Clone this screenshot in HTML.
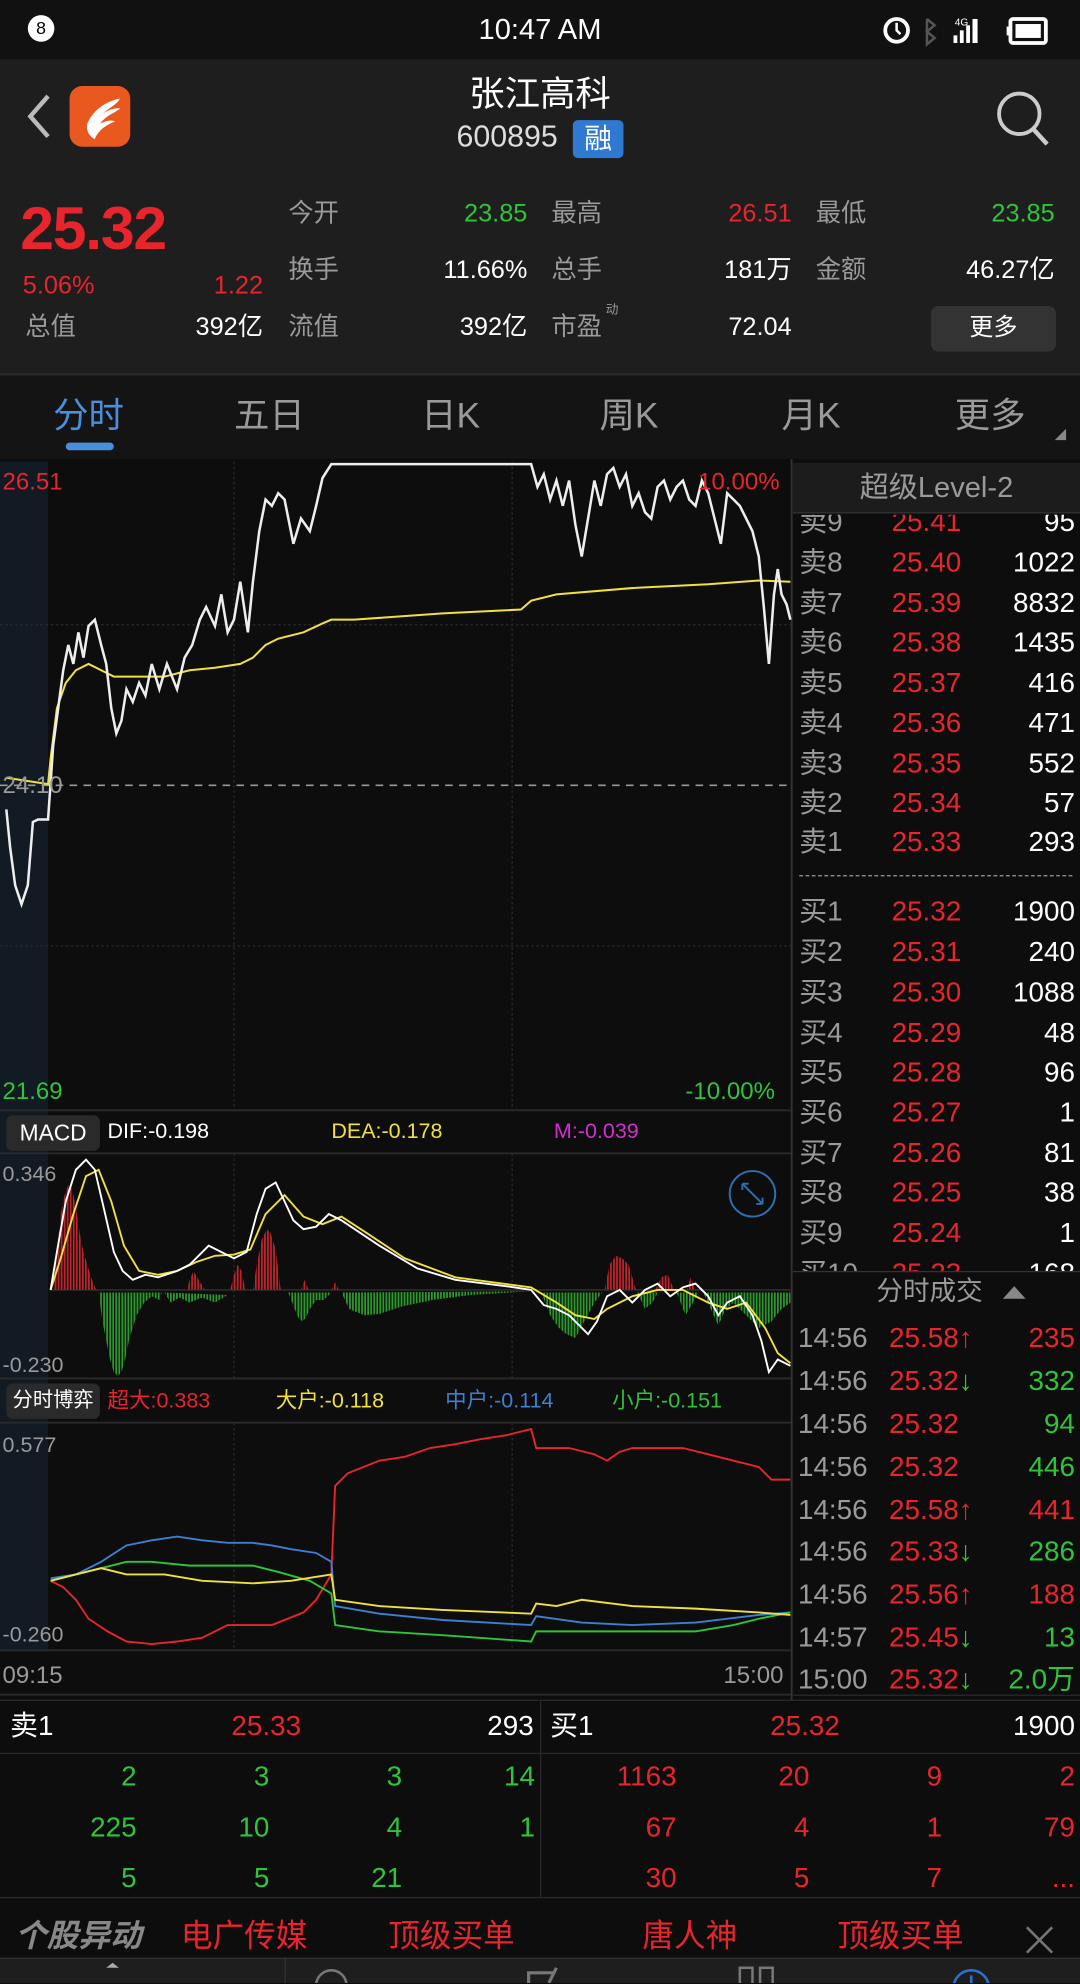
<!DOCTYPE html>
<html><head><meta charset="utf-8">
<style>
*{margin:0;padding:0;box-sizing:border-box}
html,body{width:1080px;height:1984px;overflow:hidden;background:#0d0d0d}
#w{position:absolute;left:0;top:0;width:854px;height:1568px;transform:scale(1.26464);transform-origin:0 0;font-family:"Liberation Sans","Noto Sans CJK SC",sans-serif;color:#fff;background:#0d0d0d}
.a{position:absolute;white-space:nowrap;line-height:1}
.r{color:#e8242d}.g{color:#2fc43a}.gr{color:#9a9a9a}.y{color:#f0e040}
.R{text-align:right}
</style></head><body><div id="w">
<div class="a" style="left:0;top:0;width:854px;height:47px;background:#111"></div>
<div class="a" style="left:22px;top:12px;width:21px;height:21px;border-radius:50%;background:#fff;color:#000;font-size:14px;text-align:center;line-height:21px">8</div>
<div class="a" style="left:0;width:854px;top:12px;text-align:center;font-size:23px">10:47 AM</div>
<svg class="a" style="left:695px;top:10px" width="140" height="28"><circle cx="14" cy="14" r="9" fill="none" stroke="#fff" stroke-width="3"/><path d="M14 8v6l3 3" stroke="#fff" stroke-width="2" fill="none"/><path d="M38 5l6 5-6 5 6 5-6 5V5" stroke="#555" stroke-width="2" fill="none"/><text x="60" y="10" fill="#fff" font-size="8" font-family="Liberation Sans">4G</text><rect x="59" y="18" width="3" height="6" fill="#fff"/><rect x="64" y="14" width="3" height="10" fill="#fff"/><rect x="69" y="10" width="3" height="14" fill="#fff"/><rect x="74" y="5" width="4" height="19" fill="#fff"/><rect x="104" y="5" width="28" height="19" rx="2" fill="none" stroke="#fff" stroke-width="3"/><rect x="108" y="9" width="20" height="11" fill="#fff"/><rect x="101" y="11" width="3" height="7" fill="#fff"/></svg>
<div class="a" style="left:0;top:47px;width:854px;height:248px;background:#1e1e1e"></div>
<svg class="a" style="left:18px;top:72px" width="26" height="40"><path d="M20 4L6 20l14 16" stroke="#bbb" stroke-width="3.5" fill="none"/></svg>
<div class="a" style="left:55px;top:68px;width:48px;height:48px;border-radius:10px;background:#e9581e"></div>
<svg class="a" style="left:55px;top:68px" width="48" height="48"><path d="M14 30c4-10 14-18 26-20-4 6-10 8-14 12 6-4 12-5 14-4-6 4-12 6-16 12 5-3 10-3 12-2-8 3-14 8-16 14-4-2-7-6-6-12z" fill="#fff"/></svg>
<div class="a" style="left:0;width:854px;top:61px;text-align:center;font-size:28px">张江高科</div>
<div class="a" style="left:361px;top:97px;font-size:24px;color:#ddd">600895</div>
<div class="a" style="left:453px;top:95px;width:40px;height:30px;border-radius:4px;background:#2f7ad0;font-size:22px;text-align:center;line-height:30px">融</div>
<svg class="a" style="left:786px;top:70px" width="46" height="48"><circle cx="20" cy="20" r="16" fill="none" stroke="#ccc" stroke-width="3"/><path d="M31 32l11 12" stroke="#ccc" stroke-width="3.5"/></svg>
<div class="a r" style="left:16px;top:158px;font-size:48px;font-weight:bold;letter-spacing:-1px">25.32</div>
<div class="a r" style="left:18px;top:216px;font-size:20px">5.06%</div>
<div class="a r R" style="left:108px;width:100px;top:216px;font-size:20px">1.22</div>
<div class="a gr" style="left:20px;top:249px;font-size:20px">总值</div>
<div class="a R" style="left:108px;width:100px;top:249px;font-size:20px">392亿</div>
<div class="a gr" style="left:228px;top:159px;font-size:20px">今开</div><div class="a g R" style="left:317px;width:100px;top:159px;font-size:20px">23.85</div>
<div class="a gr" style="left:436px;top:159px;font-size:20px">最高</div><div class="a r R" style="left:526px;width:100px;top:159px;font-size:20px">26.51</div>
<div class="a gr" style="left:645px;top:159px;font-size:20px">最低</div><div class="a g R" style="left:734px;width:100px;top:159px;font-size:20px">23.85</div>
<div class="a gr" style="left:228px;top:204px;font-size:20px">换手</div><div class="a R" style="left:317px;width:100px;top:204px;font-size:20px">11.66%</div>
<div class="a gr" style="left:436px;top:204px;font-size:20px">总手</div><div class="a R" style="left:526px;width:100px;top:204px;font-size:20px">181万</div>
<div class="a gr" style="left:645px;top:204px;font-size:20px">金额</div><div class="a R" style="left:734px;width:100px;top:204px;font-size:20px">46.27亿</div>
<div class="a gr" style="left:228px;top:249px;font-size:20px">流值</div><div class="a R" style="left:317px;width:100px;top:249px;font-size:20px">392亿</div>
<div class="a gr" style="left:436px;top:249px;font-size:20px">市盈</div><div class="a gr" style="left:479px;top:241px;font-size:10px">动</div><div class="a R" style="left:526px;width:100px;top:249px;font-size:20px">72.04</div>
<div class="a" style="left:736px;top:242px;width:99px;height:36px;border-radius:6px;background:#333;font-size:19px;text-align:center;line-height:36px">更多</div>
<div class="a" style="left:0;top:295px;width:854px;height:2px;background:#2a2a2a"></div>
<div class="a" style="left:0;top:297px;width:854px;height:66px;background:#141414"></div>
<div class="a" style="left:42px;top:315px;font-size:28px;color:#4a8fde">分时</div>
<div class="a" style="left:52px;top:350px;width:38px;height:6px;border-radius:3px;background:#4a8fde"></div>
<div class="a gr" style="left:185px;top:315px;font-size:28px">五日</div>
<div class="a gr" style="left:333px;top:315px;font-size:28px">日K</div>
<div class="a gr" style="left:474px;top:315px;font-size:28px">周K</div>
<div class="a gr" style="left:618px;top:315px;font-size:28px">月K</div>
<div class="a gr" style="left:755px;top:315px;font-size:28px">更多</div>
<svg class="a" style="left:834px;top:339px" width="10" height="10"><path d="M9 0V9H0z" fill="#888"/></svg>
<svg class="a" style="left:0;top:363px" width="627" height="982" viewBox="0 363 627 982">
<defs>
<pattern id="pr" width="2.4" height="10" patternUnits="userSpaceOnUse"><rect width="1.4" height="10" fill="#c0232a"/></pattern>
<pattern id="pg" width="2.4" height="10" patternUnits="userSpaceOnUse"><rect width="1.4" height="10" fill="#2a9a2a"/></pattern>
</defs>
<rect x="0" y="363" width="627" height="982" fill="#0d0d0d"/>
<rect x="0" y="365" width="38" height="940" fill="#121a24"/>
<g stroke="#2a2a2a" stroke-width="1" stroke-dasharray="2 2">
<path d="M185 365V878M405 365V878M185 912V1090M405 912V1090M185 1125V1305M405 1125V1305M0 494H625M0 748H625"/></g>
<path d="M0 621H625" stroke="#999" stroke-width="1.3" stroke-dasharray="6 5"/>
<path d="M0 878H627M0 912H627M0 1090H627M0 1125H627M0 1305H627M0 1340H627" stroke="#2a2a2a" stroke-width="1.5"/>
<path d="M626 363V1345" stroke="#333" stroke-width="1.5"/>
<polyline fill="none" stroke="#f0e040" stroke-width="1.6" points="5,615 38,620 40,600 45,560 52,540 60,530 70,525 80,530 90,535 100,535 130,535 150,530 170,528 190,525 200,520 210,510 220,505 240,500 255,493 262,490 280,490 350,485 412,482 420,475 440,470 500,465 560,462 600,459 625,460"/>
<polyline fill="none" stroke="#eee" stroke-width="2" points="5,640 8,670 12,700 17,715 22,700 26,650 30,648 38,648 42,590 46,560 50,530 54,510 58,525 62,500 66,520 70,495 75,490 80,510 84,525 88,560 92,580 96,570 100,545 105,555 110,540 115,550 120,525 126,545 132,525 140,545 146,520 152,510 158,490 163,480 170,495 175,470 180,500 185,490 190,460 196,500 200,460 205,420 210,395 215,400 220,390 225,395 232,430 238,410 245,420 250,400 255,378 262,367 420,367 425,385 430,375 435,395 440,380 445,400 450,380 455,415 460,440 465,410 470,380 475,400 480,375 485,370 490,385 495,375 500,400 505,390 510,405 515,410 520,385 525,380 530,395 535,385 540,380 545,395 550,400 555,380 560,390 565,410 570,430 575,390 580,395 585,400 590,410 595,420 600,440 604,480 608,525 612,470 615,450 618,470 622,478 625,490"/>
<g fill="url(#pr)">
<polygon points="42,1020 45,990 48,960 51,945 54,937 57,940 60,955 63,975 66,990 69,1000 72,1010 76,1020"/>
<polygon points="148,1020 150,1012 153,1005 156,1010 162,1020"/>
<polygon points="182,1020 185,1008 188,1000 191,1005 194,1020"/>
<polygon points="200,1020 203,1000 207,980 211,972 214,975 218,988 222,1020"/>
<polygon points="238,1020 241,1012 244,1020"/><polygon points="262,1020 265,1014 268,1020"/>
<polygon points="478,1020 482,1000 487,993 492,995 497,1000 503,1020"/>
<polygon points="518,1020 523,1010 528,1008 533,1020"/><polygon points="543,1020 546,1010 550,1020"/>
</g>
<g fill="url(#pg)">
<polygon points="78,1022 81,1045 84,1060 87,1075 90,1085 93,1088 96,1085 99,1075 102,1060 105,1050 108,1040 111,1035 114,1030 120,1025 126,1028 128,1022"/>
<polygon points="130,1022 135,1030 142,1026 150,1030 160,1026 170,1030 180,1024"/>
<polygon points="228,1022 233,1035 236,1042 239,1045 242,1042 245,1035 250,1028 256,1028 262,1022"/>
<polygon points="270,1022 276,1035 288,1040 300,1039 318,1033 342,1028 372,1024 420,1021"/>
<polygon points="428,1022 435,1040 442,1050 448,1055 455,1058 462,1045 470,1030 476,1022"/>
<polygon points="504,1022 510,1035 516,1030 520,1022"/>
<polygon points="535,1022 542,1040 548,1030 552,1022"/>
<polygon points="556,1022 562,1035 568,1048 574,1035 580,1030 590,1040 600,1050 610,1045 618,1035 625,1030 625,1022"/>
</g>
<path d="M40 1020H625" stroke="#3a3a3a" stroke-width="0.8"/>
<polyline fill="none" stroke="#f0e040" stroke-width="1.5" points="40,1020 48,995 58,960 68,930 78,925 88,950 98,985 110,1005 125,1008 140,1005 155,998 170,993 185,992 198,988 210,960 225,945 240,962 255,968 270,962 290,975 320,995 360,1010 420,1018 440,1030 455,1040 470,1043 480,1035 500,1025 520,1020 540,1020 560,1030 575,1035 590,1030 605,1050 615,1070 625,1078"/>
<polyline fill="none" stroke="#fff" stroke-width="1.5" points="40,1020 45,990 52,950 60,925 68,917 75,925 82,955 90,990 97,1005 105,1012 115,1008 125,1010 140,1005 150,1000 158,992 165,985 175,990 185,995 195,990 203,960 210,940 218,935 225,950 232,965 240,972 250,970 260,960 270,965 300,985 330,1003 360,1012 400,1017 420,1020 430,1032 440,1035 450,1040 458,1048 465,1055 472,1045 480,1025 490,1020 500,1030 510,1020 520,1015 530,1025 540,1018 550,1015 560,1025 568,1040 575,1030 585,1025 595,1040 602,1060 608,1085 615,1075 625,1080"/>
<circle cx="595" cy="944" r="18" fill="none" stroke="#2f6fb0" stroke-width="1.5"/>
<path d="M587 936l16 16M587 936v5M587 936h5M603 952v-5M603 952h-5" stroke="#2f6fb0" stroke-width="1.5"/>
<polyline fill="none" stroke="#e8242d" stroke-width="1.5" points="40,1250 50,1255 60,1265 70,1280 85,1290 100,1298 120,1300 140,1298 160,1295 180,1285 200,1285 215,1285 240,1275 250,1265 262,1245 265,1175 275,1165 300,1155 320,1152 340,1145 360,1142 380,1138 400,1135 420,1130 424,1145 435,1145 450,1145 470,1150 480,1155 490,1148 500,1145 520,1145 540,1145 560,1150 580,1155 600,1160 610,1170 625,1170"/>
<polyline fill="none" stroke="#3d7fd0" stroke-width="1.5" points="40,1248 60,1245 80,1235 100,1222 120,1218 140,1215 160,1218 180,1220 200,1220 215,1222 230,1225 250,1228 262,1235 265,1270 300,1276 350,1281 420,1285 424,1278 460,1283 500,1285 550,1283 600,1277 625,1275"/>
<polyline fill="none" stroke="#2fc43a" stroke-width="1.5" points="40,1250 60,1245 80,1240 100,1235 120,1235 150,1238 200,1238 220,1243 245,1250 262,1260 265,1285 300,1290 350,1293 420,1298 424,1290 460,1290 500,1290 550,1290 580,1285 600,1280 625,1275"/>
<polyline fill="none" stroke="#f0e040" stroke-width="1.5" points="40,1250 60,1245 80,1240 100,1245 130,1245 160,1250 200,1252 230,1250 262,1245 265,1265 300,1270 350,1273 420,1276 424,1268 440,1270 460,1265 500,1270 550,1272 600,1275 625,1277"/>
</svg>
<div class="a r" style="left:2px;top:372px;font-size:19px">26.51</div>
<div class="a r" style="left:552px;top:372px;font-size:19px">10.00%</div>
<div class="a gr" style="left:2px;top:612px;font-size:19px">24.10</div>
<div class="a g" style="left:2px;top:854px;font-size:19px">21.69</div>
<div class="a g" style="left:542px;top:854px;font-size:19px">-10.00%</div>
<div class="a" style="left:5px;top:882px;width:74px;height:28px;border-radius:5px;background:#2a2a2a;font-size:18px;text-align:center;line-height:28px">MACD</div>
<div class="a" style="left:85px;top:886px;font-size:17px">DIF:-0.198</div>
<div class="a y" style="left:262px;top:886px;font-size:17px">DEA:-0.178</div>
<div class="a" style="left:438px;top:886px;font-size:17px;color:#d030d0">M:-0.039</div>
<div class="a gr" style="left:2px;top:920px;font-size:17px">0.346</div>
<div class="a gr" style="left:2px;top:1071px;font-size:17px">-0.230</div>
<div class="a" style="left:5px;top:1094px;width:74px;height:28px;border-radius:5px;background:#2a2a2a;font-size:16px;text-align:center;line-height:28px">分时博弈</div>
<div class="a r" style="left:85px;top:1099px;font-size:17px">超大:0.383</div>
<div class="a y" style="left:218px;top:1099px;font-size:17px">大户:-0.118</div>
<div class="a" style="left:352px;top:1099px;font-size:17px;color:#3d7fd0">中户:-0.114</div>
<div class="a g" style="left:484px;top:1099px;font-size:17px">小户:-0.151</div>
<div class="a gr" style="left:2px;top:1134px;font-size:17px">0.577</div>
<div class="a gr" style="left:2px;top:1284px;font-size:17px">-0.260</div>
<div class="a gr" style="left:2px;top:1316px;font-size:19px">09:15</div>
<div class="a gr" style="left:572px;top:1316px;font-size:19px">15:00</div>
<div class="a" style="left:627px;top:366px;width:227px;height:40px;background:#1c1c1c;border-bottom:1px solid #333"></div>
<div class="a gr" style="left:627px;width:227px;top:374px;text-align:center;font-size:23px">超级Level-2</div>
<div style="position:absolute;left:0;top:0;width:854px;height:1005px;clip-path:inset(407px 0 0 627px)">
<div class="a gr" style="left:632px;top:402px;font-size:22px">卖9</div><div class="a r" style="left:705px;top:402px;font-size:22px">25.41</div><div class="a R" style="left:750px;width:100px;top:402px;font-size:22px">95</div>
</div>
<div style="position:absolute;left:0;top:0;width:854px;height:1005px;clip-path:inset(990px 0 0 627px)">
<div class="a gr" style="left:632px;top:996px;font-size:22px">买10</div><div class="a r" style="left:705px;top:996px;font-size:22px">25.23</div><div class="a R" style="left:750px;width:100px;top:996px;font-size:22px">168</div>
</div>
<div class="a gr" style="left:632px;top:434px;font-size:22px">卖8</div><div class="a r" style="left:705px;top:434px;font-size:22px">25.40</div><div class="a R" style="left:750px;width:100px;top:434px;font-size:22px">1022</div>
<div class="a gr" style="left:632px;top:466px;font-size:22px">卖7</div><div class="a r" style="left:705px;top:466px;font-size:22px">25.39</div><div class="a R" style="left:750px;width:100px;top:466px;font-size:22px">8832</div>
<div class="a gr" style="left:632px;top:497px;font-size:22px">卖6</div><div class="a r" style="left:705px;top:497px;font-size:22px">25.38</div><div class="a R" style="left:750px;width:100px;top:497px;font-size:22px">1435</div>
<div class="a gr" style="left:632px;top:529px;font-size:22px">卖5</div><div class="a r" style="left:705px;top:529px;font-size:22px">25.37</div><div class="a R" style="left:750px;width:100px;top:529px;font-size:22px">416</div>
<div class="a gr" style="left:632px;top:561px;font-size:22px">卖4</div><div class="a r" style="left:705px;top:561px;font-size:22px">25.36</div><div class="a R" style="left:750px;width:100px;top:561px;font-size:22px">471</div>
<div class="a gr" style="left:632px;top:593px;font-size:22px">卖3</div><div class="a r" style="left:705px;top:593px;font-size:22px">25.35</div><div class="a R" style="left:750px;width:100px;top:593px;font-size:22px">552</div>
<div class="a gr" style="left:632px;top:624px;font-size:22px">卖2</div><div class="a r" style="left:705px;top:624px;font-size:22px">25.34</div><div class="a R" style="left:750px;width:100px;top:624px;font-size:22px">57</div>
<div class="a gr" style="left:632px;top:655px;font-size:22px">卖1</div><div class="a r" style="left:705px;top:655px;font-size:22px">25.33</div><div class="a R" style="left:750px;width:100px;top:655px;font-size:22px">293</div>
<div class="a" style="left:632px;top:692px;width:216px;border-top:1.5px dashed #999"></div>
<div class="a gr" style="left:632px;top:710px;font-size:22px">买1</div><div class="a r" style="left:705px;top:710px;font-size:22px">25.32</div><div class="a R" style="left:750px;width:100px;top:710px;font-size:22px">1900</div>
<div class="a gr" style="left:632px;top:742px;font-size:22px">买2</div><div class="a r" style="left:705px;top:742px;font-size:22px">25.31</div><div class="a R" style="left:750px;width:100px;top:742px;font-size:22px">240</div>
<div class="a gr" style="left:632px;top:774px;font-size:22px">买3</div><div class="a r" style="left:705px;top:774px;font-size:22px">25.30</div><div class="a R" style="left:750px;width:100px;top:774px;font-size:22px">1088</div>
<div class="a gr" style="left:632px;top:806px;font-size:22px">买4</div><div class="a r" style="left:705px;top:806px;font-size:22px">25.29</div><div class="a R" style="left:750px;width:100px;top:806px;font-size:22px">48</div>
<div class="a gr" style="left:632px;top:837px;font-size:22px">买5</div><div class="a r" style="left:705px;top:837px;font-size:22px">25.28</div><div class="a R" style="left:750px;width:100px;top:837px;font-size:22px">96</div>
<div class="a gr" style="left:632px;top:869px;font-size:22px">买6</div><div class="a r" style="left:705px;top:869px;font-size:22px">25.27</div><div class="a R" style="left:750px;width:100px;top:869px;font-size:22px">1</div>
<div class="a gr" style="left:632px;top:901px;font-size:22px">买7</div><div class="a r" style="left:705px;top:901px;font-size:22px">25.26</div><div class="a R" style="left:750px;width:100px;top:901px;font-size:22px">81</div>
<div class="a gr" style="left:632px;top:932px;font-size:22px">买8</div><div class="a r" style="left:705px;top:932px;font-size:22px">25.25</div><div class="a R" style="left:750px;width:100px;top:932px;font-size:22px">38</div>
<div class="a gr" style="left:632px;top:964px;font-size:22px">买9</div><div class="a r" style="left:705px;top:964px;font-size:22px">25.24</div><div class="a R" style="left:750px;width:100px;top:964px;font-size:22px">1</div>
<div class="a" style="left:627px;top:1005px;width:227px;height:1px;background:#333"></div>
<div class="a gr" style="left:693px;top:1011px;font-size:21px">分时成交</div>
<svg class="a" style="left:792px;top:1016px" width="20" height="12"><path d="M10 1L19 11H1z" fill="#888"/></svg>
<div class="a" style="left:627px;top:1340px;width:227px;height:1px;background:#2a2a2a"></div>
<div class="a gr" style="left:631px;top:1047px;font-size:22px">14:56</div><div class="a r" style="left:703px;top:1047px;font-size:22px">25.58↑</div><div class="a r R" style="left:750px;width:100px;top:1047px;font-size:22px">235</div>
<div class="a gr" style="left:631px;top:1081px;font-size:22px">14:56</div><div class="a r" style="left:703px;top:1081px;font-size:22px">25.32<span class="g">↓</span></div><div class="a g R" style="left:750px;width:100px;top:1081px;font-size:22px">332</div>
<div class="a gr" style="left:631px;top:1115px;font-size:22px">14:56</div><div class="a r" style="left:703px;top:1115px;font-size:22px">25.32</div><div class="a g R" style="left:750px;width:100px;top:1115px;font-size:22px">94</div>
<div class="a gr" style="left:631px;top:1149px;font-size:22px">14:56</div><div class="a r" style="left:703px;top:1149px;font-size:22px">25.32</div><div class="a g R" style="left:750px;width:100px;top:1149px;font-size:22px">446</div>
<div class="a gr" style="left:631px;top:1183px;font-size:22px">14:56</div><div class="a r" style="left:703px;top:1183px;font-size:22px">25.58↑</div><div class="a r R" style="left:750px;width:100px;top:1183px;font-size:22px">441</div>
<div class="a gr" style="left:631px;top:1216px;font-size:22px">14:56</div><div class="a r" style="left:703px;top:1216px;font-size:22px">25.33<span class="g">↓</span></div><div class="a g R" style="left:750px;width:100px;top:1216px;font-size:22px">286</div>
<div class="a gr" style="left:631px;top:1250px;font-size:22px">14:56</div><div class="a r" style="left:703px;top:1250px;font-size:22px">25.56↑</div><div class="a r R" style="left:750px;width:100px;top:1250px;font-size:22px">188</div>
<div class="a gr" style="left:631px;top:1284px;font-size:22px">14:57</div><div class="a r" style="left:703px;top:1284px;font-size:22px">25.45<span class="g">↓</span></div><div class="a g R" style="left:750px;width:100px;top:1284px;font-size:22px">13</div>
<div class="a gr" style="left:631px;top:1317px;font-size:22px">15:00</div><div class="a r" style="left:703px;top:1317px;font-size:22px">25.32<span class="g">↓</span></div><div class="a g R" style="left:750px;width:100px;top:1317px;font-size:22px">2.0万</div>
<div class="a" style="left:0;top:1344px;width:854px;height:1px;background:#2a2a2a"></div>
<div class="a" style="left:0;top:1386px;width:854px;height:1px;background:#2a2a2a"></div>
<div class="a" style="left:0;top:1500px;width:854px;height:1px;background:#2a2a2a"></div>
<div class="a" style="left:427px;top:1345px;width:1px;height:155px;background:#2a2a2a"></div>
<div class="a" style="left:8px;top:1354px;font-size:22px">卖1</div><div class="a r" style="left:183px;top:1354px;font-size:22px">25.33</div><div class="a R" style="left:322px;width:100px;top:1354px;font-size:22px">293</div>
<div class="a" style="left:435px;top:1354px;font-size:22px">买1</div><div class="a r" style="left:609px;top:1354px;font-size:22px">25.32</div><div class="a R" style="left:750px;width:100px;top:1354px;font-size:22px">1900</div>
<div style="font-size:22px">
<div class="a g R" style="left:40px;width:68px;top:1394px">2</div><div class="a g R" style="left:145px;width:68px;top:1394px">3</div><div class="a g R" style="left:250px;width:68px;top:1394px">3</div><div class="a g R" style="left:355px;width:68px;top:1394px">14</div>
<div class="a g R" style="left:40px;width:68px;top:1434px">225</div><div class="a g R" style="left:145px;width:68px;top:1434px">10</div><div class="a g R" style="left:250px;width:68px;top:1434px">4</div><div class="a g R" style="left:355px;width:68px;top:1434px">1</div>
<div class="a g R" style="left:40px;width:68px;top:1474px">5</div><div class="a g R" style="left:145px;width:68px;top:1474px">5</div><div class="a g R" style="left:250px;width:68px;top:1474px">21</div>
<div class="a r R" style="left:467px;width:68px;top:1394px">1163</div><div class="a r R" style="left:572px;width:68px;top:1394px">20</div><div class="a r R" style="left:677px;width:68px;top:1394px">9</div><div class="a r R" style="left:782px;width:68px;top:1394px">2</div>
<div class="a r R" style="left:467px;width:68px;top:1434px">67</div><div class="a r R" style="left:572px;width:68px;top:1434px">4</div><div class="a r R" style="left:677px;width:68px;top:1434px">1</div><div class="a r R" style="left:782px;width:68px;top:1434px">79</div>
<div class="a r R" style="left:467px;width:68px;top:1474px">30</div><div class="a r R" style="left:572px;width:68px;top:1474px">5</div><div class="a r R" style="left:677px;width:68px;top:1474px">7</div><div class="a r R" style="left:782px;width:68px;top:1474px">...</div>
</div>
<div class="a" style="left:12px;top:1519px;font-size:25px;font-weight:bold;font-style:italic;color:#888">个股异动</div>
<div class="a r" style="left:143px;top:1519px;font-size:25px">电广传媒</div>
<div class="a r" style="left:307px;top:1519px;font-size:25px">顶级买单</div>
<div class="a r" style="left:508px;top:1519px;font-size:25px">唐人神</div>
<div class="a r" style="left:662px;top:1519px;font-size:25px">顶级买单</div>
<svg class="a" style="left:810px;top:1522px" width="24" height="24"><path d="M2 2l20 20M22 2L2 22" stroke="#777" stroke-width="2"/></svg>
<div class="a" style="left:0;top:1548px;width:854px;height:20px;background:#1e1e1e;border-top:1px solid #333"></div>
<div class="a" style="left:225px;top:1548px;width:1px;height:20px;background:#333"></div>
<svg class="a" style="left:0;top:1548px" width="854" height="20"><path d="M84 8l5-4 5 4z" fill="#aaa"/><circle cx="262" cy="22" r="12" fill="none" stroke="#777" stroke-width="2"/><path d="M418 20v-8h20M440 8l-6 12" stroke="#777" stroke-width="2.5" fill="none"/><rect x="585" y="8" width="10" height="14" fill="none" stroke="#777" stroke-width="2"/><rect x="601" y="8" width="10" height="14" fill="none" stroke="#777" stroke-width="2"/><circle cx="768" cy="24" r="14" fill="none" stroke="#2f6fd0" stroke-width="2"/><path d="M768 14v8" stroke="#2f6fd0" stroke-width="2"/></svg>
</div></body></html>
